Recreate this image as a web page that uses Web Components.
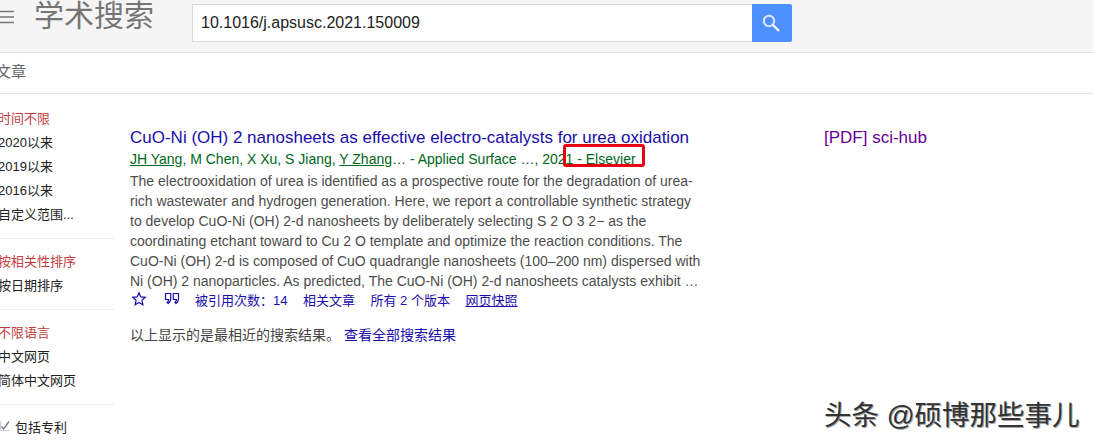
<!DOCTYPE html>
<html lang="zh">
<head>
<meta charset="utf-8">
<title>学术搜索</title>
<style>
html, body { margin: 0; height: 444px; overflow: hidden; background: #fff; }
body { font-family: "Liberation Sans", "Noto Sans CJK SC", sans-serif; font-size: 13px; color: #222; }
</style>
</head>
<body>
<scholar-page>
    <scholar-header slot="header" query="10.1016/j.apsusc.2021.150009"></scholar-header>
    <scholar-tabs slot="tabs">文章</scholar-tabs>
    <scholar-sidebar slot="sidebar">
        <filter-group>
            <filter-item active>时间不限</filter-item>
            <filter-item>2020以来</filter-item>
            <filter-item>2019以来</filter-item>
            <filter-item>2016以来</filter-item>
            <filter-item>自定义范围...</filter-item>
        </filter-group>
        <filter-group>
            <filter-item active>按相关性排序</filter-item>
            <filter-item>按日期排序</filter-item>
        </filter-group>
        <filter-group>
            <filter-item active>不限语言</filter-item>
            <filter-item>中文网页</filter-item>
            <filter-item>简体中文网页</filter-item>
        </filter-group>
        <filter-group last>
            <filter-item checked>包括专利</filter-item>
        </filter-group>
    </scholar-sidebar>
    <scholar-result slot="results"></scholar-result>
    <a slot="side" class="pdf">[PDF] sci-hub</a>
    <span slot="overlay" class="mark"></span>
    <span slot="overlay" class="wm">头条 @硕博那些事儿</span>
</scholar-page>

<script>
const pageTemplate = document.createElement('template');
pageTemplate.innerHTML = `
<style>
:host { display: block; position: relative; height: 444px; overflow: hidden; }
.body { display: flex; padding-top: 12px; }
.col { width: 563px; margin-left: 16px; flex: none; }
.side { margin-left: 131px; padding-top: 22px; }
::slotted(.pdf) { color: #660099; font-size: 17px; line-height: 20px; white-space: nowrap; }
::slotted(.mark) { position: absolute; left: 563px; top: 144px; width: 76px; height: 17px; border: 3px solid #e60012; border-radius: 3px; }
::slotted(.wm) { position: absolute; left: 824px; top: 400px; font-size: 27.5px; line-height: 32px; color: #333; white-space: nowrap;
    text-shadow: 1px 1px 0 #aaa, -1px -1px 0 #fff, 1px -1px 0 #fff, -1px 1px 0 #fff; }
</style>
<slot name="header"></slot>
<slot name="tabs"></slot>
<div class="body">
    <slot name="sidebar"></slot>
    <div class="col"><slot name="results"></slot></div>
    <div class="side"><slot name="side"></slot></div>
</div>
<slot name="overlay"></slot>
`;
class ScholarPage extends HTMLElement {
    constructor() {
        super();
        this.attachShadow({ mode: 'open' });
        this.shadowRoot.appendChild(pageTemplate.content.cloneNode(true));
    }
}

const headerTemplate = document.createElement('template');
headerTemplate.innerHTML = `
<style>
:host { display: flex; box-sizing: border-box; height: 53px; background: #f5f5f5; border-bottom: 1px solid #e0e0e0; }
.menu { display: block; flex: none; margin: 10px 20px 0 0; }
.logo { width: 120px; margin: 1px 38px 0 0; font-size: 30px; line-height: 30px; color: #757575; flex: none; }
.box { box-sizing: border-box; width: 560px; height: 38px; margin-top: 4px; padding-left: 8px; background: #fff; border: 1px solid #d9d9d9; border-right: 0; font-size: 16px; line-height: 36px; color: #222; }
.btn { box-sizing: border-box; width: 40px; height: 38px; margin-top: 4px; padding: 10px 0 0 10px; background: #4d90fe; border-radius: 0 2px 2px 0; }
.btn svg { display: block; }
</style>
<svg class="menu" viewBox="0 0 14 14" width="14" height="14" stroke="#777" stroke-width="1.5"><path d="M0 1.5h14M0 7h14M0 12.5h14"></path></svg>
<div class="logo">学术搜索</div>
<div class="box"></div>
<div class="btn">
    <svg viewBox="0 0 18 18" width="18" height="18" fill="none">
        <circle cx="7" cy="7" r="5.2" stroke-width="2" stroke="#dbe8ff"></circle>
        <path d="M11 11l6 6" stroke-width="2.2" stroke="#fff"></path>
    </svg>
</div>
`;
class ScholarHeader extends HTMLElement {
    constructor() {
        super();
        this.attachShadow({ mode: 'open' });
        this.shadowRoot.appendChild(headerTemplate.content.cloneNode(true));
        this.shadowRoot.querySelector('.box').textContent = this.getAttribute('query');
    }
}

const tabsTemplate = document.createElement('template');
tabsTemplate.innerHTML = `
<style>
:host { display: block; box-sizing: border-box; height: 41px; border-bottom: 1px solid #e5e5e5; color: #666; font-size: 15px; line-height: 38px; text-indent: -4px; }
</style>
<slot></slot>
`;
class ScholarTabs extends HTMLElement {
    constructor() {
        super();
        this.attachShadow({ mode: 'open' });
        this.shadowRoot.appendChild(tabsTemplate.content.cloneNode(true));
    }
}

const sidebarTemplate = document.createElement('template');
sidebarTemplate.innerHTML = `
<style>
:host { display: block; flex: none; width: 116px; margin: -1px 0 0 -2px; }
</style>
<slot></slot>
`;
class ScholarSidebar extends HTMLElement {
    constructor() {
        super();
        this.attachShadow({ mode: 'open' });
        this.shadowRoot.appendChild(sidebarTemplate.content.cloneNode(true));
    }
}

const groupTemplate = document.createElement('template');
groupTemplate.innerHTML = `
<style>
:host { display: block; padding-bottom: 13px; margin-bottom: 9px; border-bottom: 1px solid #eee; }
:host([last]) { border-bottom: 0; }
</style>
<slot></slot>
`;
class FilterGroup extends HTMLElement {
    constructor() {
        super();
        this.attachShadow({ mode: 'open' });
        this.shadowRoot.appendChild(groupTemplate.content.cloneNode(true));
    }
}

const itemTemplate = document.createElement('template');
itemTemplate.innerHTML = `
<style>
:host { display: flex; align-items: center; height: 24px; color: #222; font-size: 13px; white-space: nowrap; }
:host([active]) { color: #c33d3d; }
svg { display: none; margin: 0 5px 0 2px; }
:host([checked]) svg { display: block; }
</style>
<svg viewBox="0 0 10 10" width="10" height="10" fill="none" stroke="#777" stroke-width="1.3">
    <path d="M0.5 0.5v9h9" stroke="#ccc" stroke-width="1"></path>
    <path d="M1.5 5.5l2 2.5 5.5-7.5"></path>
</svg>
<slot></slot>
`;
class FilterItem extends HTMLElement {
    constructor() {
        super();
        this.attachShadow({ mode: 'open' });
        this.shadowRoot.appendChild(itemTemplate.content.cloneNode(true));
    }
}

const resultTemplate = document.createElement('template');
resultTemplate.innerHTML = `
<style>
:host { display: block; padding-top: 22px; font-size: 13px; }
a { color: #1a0dab; text-decoration: none; }
.title { display: block; font-size: 17px; line-height: 20px; white-space: nowrap; color: #1a0dab; }
.meta { margin-top: 1px; line-height: 20px; color: #006621; font-size: 14px; white-space: nowrap; }
.meta u { text-underline-offset: 1px; }
.snippet { margin-top: 2px; line-height: 20px; color: #4d4d4d; font-size: 14px; white-space: nowrap; }
.snippet div { height: 20px; }
.actions { display: flex; align-items: center; height: 20px; margin-top: -2px; gap: 15.5px; white-space: nowrap; }
.actions svg { display: block; flex: none; margin-left: 1px; }
.note { margin-top: 16px; line-height: 20px; color: #444; font-size: 14px; white-space: nowrap; display: flex; }
.note span { width: 214px; flex: none; }
</style>
<a class="title">CuO-Ni (OH) 2 nanosheets as effective electro-catalysts for urea oxidation</a>
<div class="meta"><u>JH Yang</u>, M Chen, X Xu, S Jiang, <u>Y Zhang</u>… - Applied Surface …, 2021 - Elsevier</div>
<div class="snippet">
    <div>The electrooxidation of urea is identified as a prospective route for the degradation of urea-</div>
    <div>rich wastewater and hydrogen generation. Here, we report a controllable synthetic strategy</div>
    <div>to develop CuO-Ni (OH) 2-d nanosheets by deliberately selecting S 2 O 3 2− as the</div>
    <div>coordinating etchant toward to Cu 2 O template and optimize the reaction conditions. The</div>
    <div>CuO-Ni (OH) 2-d is composed of CuO quadrangle nanosheets (100–200 nm) dispersed with</div>
    <div>Ni (OH) 2 nanoparticles. As predicted, The CuO-Ni (OH) 2-d nanosheets catalysts exhibit …</div>
</div>
<div class="actions">
    <svg viewBox="0 0 16 16" width="16" height="16" fill="none" stroke="#1a0dab" stroke-width="1.2"><path d="M8 1.8l1.8 4.1 4.5.4-3.4 3 1 4.4L8 11.4l-3.9 2.3 1-4.4-3.4-3 4.5-.4z"></path></svg>
    <svg viewBox="0 0 16 16" width="16" height="16" fill="none" stroke="#1a0dab" stroke-width="1.2"><path d="M1.5 2.5h5.2v5.5c0 1.8-1 3.3-2.5 4.5L3.2 11.5c.9-.9 1.4-1.8 1.5-3H1.5zM9.3 2.5h5.2v5.5c0 1.8-1 3.3-2.5 4.5L11 11.5c.9-.9 1.4-1.8 1.5-3H9.3z"></path></svg>
    <a>被引用次数：14</a>
    <a>相关文章</a>
    <a>所有 2 个版本</a>
    <a style="text-decoration:underline">网页快照</a>
</div>
<div class="note"><span>以上显示的是最相近的搜索结果。</span><a>查看全部搜索结果</a></div>
`;
class ScholarResult extends HTMLElement {
    constructor() {
        super();
        this.attachShadow({ mode: 'open' });
        this.shadowRoot.appendChild(resultTemplate.content.cloneNode(true));
    }
}

customElements.define('scholar-page', ScholarPage);
customElements.define('scholar-header', ScholarHeader);
customElements.define('scholar-tabs', ScholarTabs);
customElements.define('scholar-sidebar', ScholarSidebar);
customElements.define('filter-group', FilterGroup);
customElements.define('filter-item', FilterItem);
customElements.define('scholar-result', ScholarResult);
</script>
</body>
</html>
